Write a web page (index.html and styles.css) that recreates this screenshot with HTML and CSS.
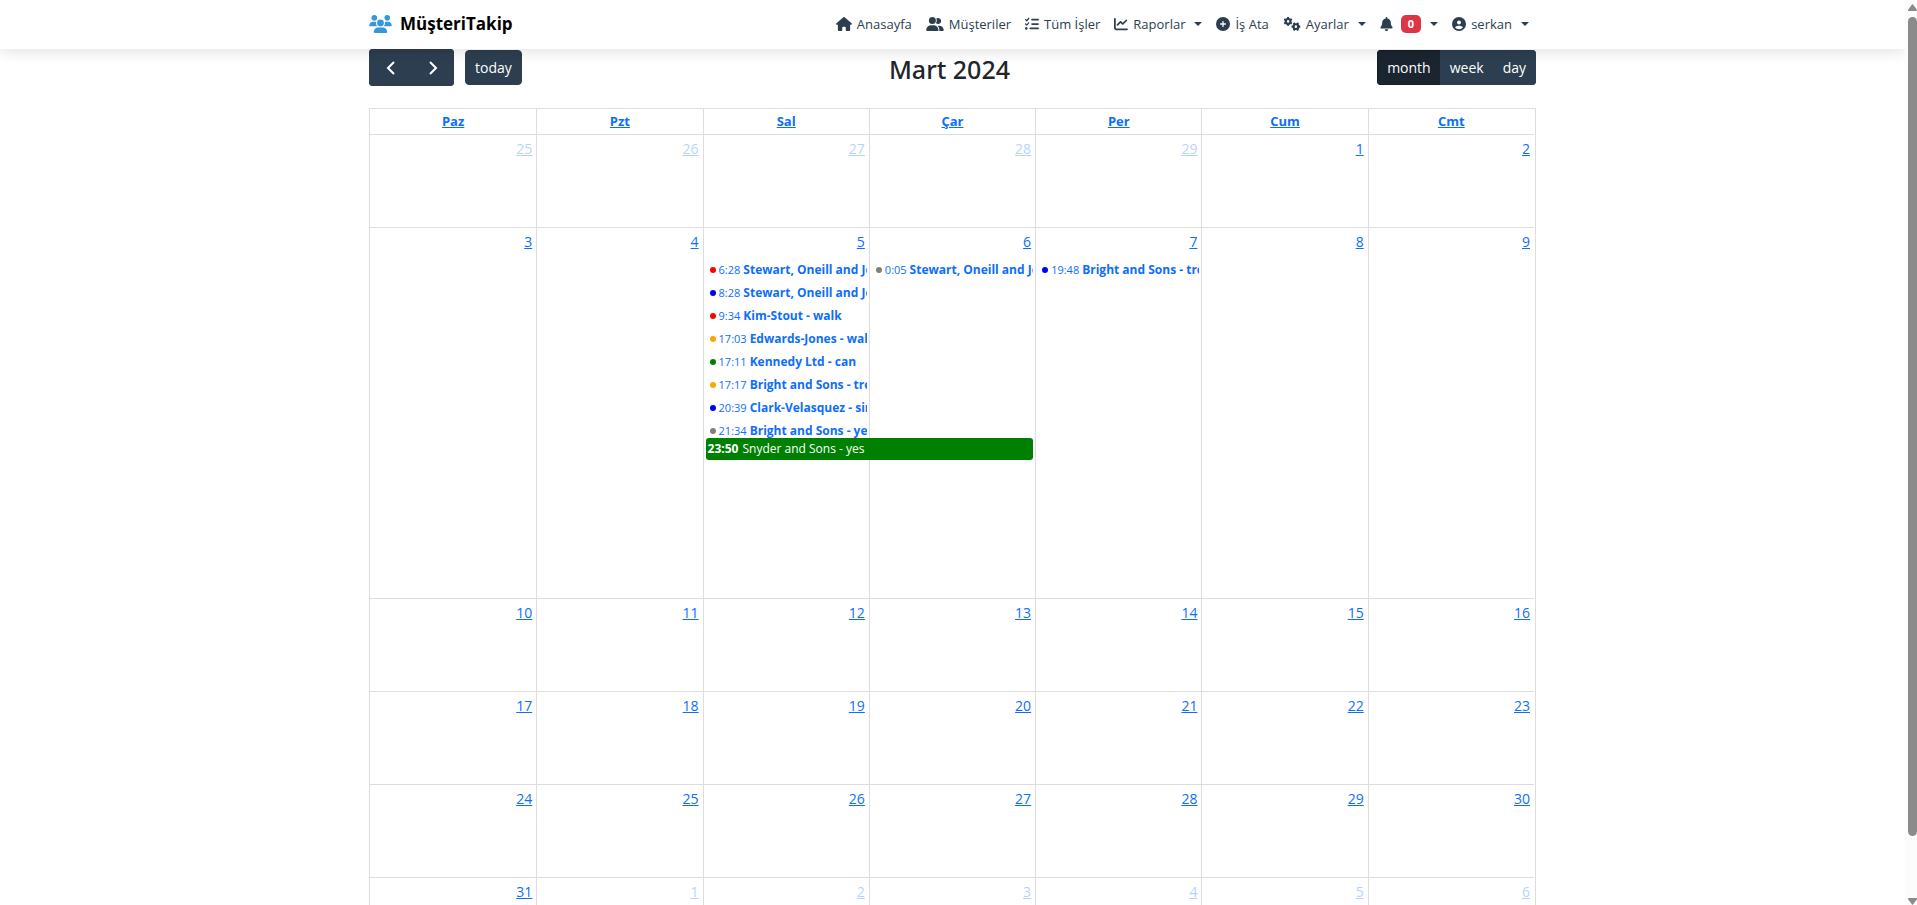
FILE: index.html
```html
<!DOCTYPE html>
<html lang="tr">
<head>
<meta charset="utf-8">
<title>MüşteriTakip</title>
<link rel="stylesheet" href="styles.css">
</head>
<body>
<header class="navbar">
  <div class="container navbar-inner">
    <a class="brand" href="#"><svg class="brand-icon" viewBox="0 0 640 512"><path d="M144 0a80 80 0 1 1 0 160A80 80 0 1 1 144 0zM512 0a80 80 0 1 1 0 160A80 80 0 1 1 512 0zM0 298.700C0 239.800 47.800 192 106.700 192h42.700c15.900 0 31 3.500 44.600 9.700c-1.300 7.200-1.900 14.700-1.900 22.300c0 38.200 16.800 72.500 43.300 96H21.300C9.600 320 0 310.400 0 298.700zM405.300 320c26-23.500 42.600-57.800 42.600-96c0-7.600-.7-15-1.900-22.300c13.600-6.300 28.700-9.700 44.600-9.700h42.700C592.200 192 640 239.800 640 298.700c0 11.800-9.600 21.300-21.300 21.300H405.300zM224 224a96 96 0 1 1 192 0 96 96 0 1 1-192 0zM128 485.300C128 411.700 187.700 352 261.300 352H378.700C452.300 352 512 411.700 512 485.300c0 14.700-11.900 26.700-26.700 26.700H154.700c-14.700 0-26.700-11.900-26.700-26.700z"/></svg>MüşteriTakip</a>
    <nav class="nav">
      <a class="nav-link" href="#"><svg class="icon icon-home" viewBox="0 0 576 512"><path d="M575.8 255.500c0 18-15 32.100-32 32.100h-32l.7 160.200c0 2.700-.2 5.400-.5 8.100V472c0 22.100-17.900 40-40 40H392c-22.100 0-40-17.900-40-40V384c0-17.700-14.300-32-32-32H256c-17.700 0-32 14.300-32 32v88c0 22.100-17.900 40-40 40H104c-22.100 0-40-17.900-40-40V287.600H32c-18 0-32-14-32-32.100c0-9 3-17 10-24L266.400 8c7-7 15-8 22-8s15 2 21 7L564.800 231.500c8 7 12 15 11 24z"/></svg>Anasayfa</a>
      <a class="nav-link" href="#"><svg class="icon icon-wide" viewBox="0 0 640 512"><path d="M96 128a128 128 0 1 1 256 0A128 128 0 1 1 96 128zM0 482.300C0 383.800 79.800 304 178.300 304h91.400C368.200 304 448 383.800 448 482.300c0 16.400-13.300 29.700-29.700 29.700H29.700C13.300 512 0 498.700 0 482.300zM609.300 512H471.400c5.400-9.400 8.600-20.300 8.600-32v-8c0-60.700-27.100-115.200-69.800-151.800c2.400-.1 4.700-.2 7.100-.2h61.400C567.800 320 640 392.200 640 481.300c0 17-13.800 30.700-30.700 30.700zM432 256c-31 0-59-12.600-79.300-32.900C372.400 196.500 384 163.600 384 128c0-26.800-6.600-52.100-18.300-74.300C384.300 40.100 407.200 32 432 32c61.900 0 112 50.100 112 112s-50.100 112-112 112z"/></svg>Müşteriler</a>
      <a class="nav-link" href="#"><svg class="icon" viewBox="0 0 512 512"><path d="M152.100 38.200c9.900 8.900 10.700 24 1.800 33.900l-72 80c-4.400 4.900-10.600 7.800-17.200 7.900s-12.900-2.400-17.600-7L7 113C-2.300 103.600-2.300 88.400 7 79s24.600-9.400 33.900 0l22.100 22.100 55.100-61.200c8.900-9.900 24-10.700 33.900-1.800zm0 160c9.900 8.900 10.700 24 1.800 33.900l-72 80c-4.400 4.900-10.600 7.800-17.200 7.900s-12.900-2.400-17.600-7L7 273c-9.400-9.400-9.400-24.600 0-33.900s24.600-9.400 33.900 0l22.100 22.100 55.100-61.200c8.900-9.900 24-10.700 33.900-1.800zM224 96c0-17.700 14.300-32 32-32H480c17.700 0 32 14.300 32 32s-14.300 32-32 32H256c-17.700 0-32-14.300-32-32zm0 160c0-17.700 14.300-32 32-32H480c17.700 0 32 14.300 32 32s-14.300 32-32 32H256c-17.700 0-32-14.300-32-32zM160 416c0-17.700 14.300-32 32-32H480c17.700 0 32 14.300 32 32s-14.300 32-32 32H192c-17.700 0-32-14.300-32-32zM48 368a48 48 0 1 1 0 96 48 48 0 1 1 0-96z"/></svg>Tüm İşler</a>
      <a class="nav-link dropdown" href="#"><svg class="icon" viewBox="0 0 512 512"><path d="M64 64c0-17.700-14.300-32-32-32S0 46.300 0 64V400c0 44.200 35.800 80 80 80H480c17.700 0 32-14.300 32-32s-14.300-32-32-32H80c-8.800 0-16-7.200-16-16V64zm406.600 86.600c12.500-12.500 12.500-32.800 0-45.300s-32.800-12.500-45.300 0L320 210.700l-57.400-57.400c-12.500-12.500-32.800-12.500-45.300 0l-112 112c-12.500 12.500-12.500 32.800 0 45.300s32.800 12.500 45.300 0L240 221.300l57.400 57.400c12.500 12.500 32.800 12.500 45.300 0l128-128z"/></svg>Raporlar</a>
      <a class="nav-link" href="#"><svg class="icon" viewBox="0 0 512 512"><path d="M256 512A256 256 0 1 0 256 0a256 256 0 1 0 0 512zM232 344V280H168c-13.300 0-24-10.700-24-24s10.700-24 24-24h64V168c0-13.300 10.700-24 24-24s24 10.700 24 24v64h64c13.300 0 24 10.700 24 24s-10.700 24-24 24H280v64c0 13.300-10.700 24-24 24s-24-10.700-24-24z"/></svg>İş Ata</a>
      <a class="nav-link dropdown" href="#"><svg class="icon icon-wide" viewBox="0 0 640 512"><g fill="none" stroke="currentColor"><circle cx="176" cy="160" r="86" stroke-width="80"/><path stroke-width="74" d="M176 0v65M176 255v65M37 80l57 33M258 207l57 33M37 240l57-33M258 113l57-33"/><circle cx="464" cy="352" r="86" stroke-width="80"/><path stroke-width="74" d="M304 352h65M559 352h65M384 213l33 57M511 434l33 57M544 213l-33 57M417 434l-33 57"/></g></svg>Ayarlar</a>
      <a class="nav-link dropdown" href="#" aria-label="Bildirimler"><svg class="icon icon-bell" viewBox="0 0 448 512"><path d="M224 0c-17.700 0-32 14.300-32 32V51.200C119 66 64 130.600 64 208v18.800c0 47-17.300 92.400-48.500 127.600l-7.400 8.300c-8.400 9.400-10.400 22.900-5.300 34.400S19.400 416 32 416H416c12.600 0 24-7.400 29.200-18.900s3.100-25-5.300-34.400l-7.400-8.300C401.300 319.200 384 273.900 384 226.800V208c0-77.400-55-142-128-156.800V32c0-17.700-14.300-32-32-32zm45.300 493.300c12-12 18.700-28.300 18.700-45.300H160c0 17 6.700 33.300 18.700 45.300s28.300 18.700 45.300 18.700s33.300-6.700 45.300-18.700z"/></svg><span class="badge">0</span></a>
      <a class="nav-link dropdown" href="#"><svg class="icon" viewBox="0 0 512 512"><path d="M399 384.200C376.900 345.800 335.400 320 288 320H224c-47.400 0-88.900 25.800-111 64.200c35.200 39.200 86.200 63.800 143 63.800s107.800-24.700 143-63.800zM0 256a256 256 0 1 1 512 0A256 256 0 1 1 0 256zm256 16a72 72 0 1 0 0-144 72 72 0 1 0 0 144z"/></svg>serkan</a>
    </nav>
  </div>
</header>
<main class="container">
  <div class="toolbar">
    <div class="toolbar-side">
      <div class="btn-group">
        <button class="btn btn-arrow" aria-label="prev"><svg class="chevron" viewBox="0 0 16 16"><path d="M11 2L5 8l6 6"/></svg></button>
        <button class="btn btn-arrow" aria-label="next"><svg class="chevron" viewBox="0 0 16 16"><path d="M5 2l6 6-6 6"/></svg></button>
      </div>
      <button class="btn">today</button>
    </div>
    <h2 class="title">Mart 2024</h2>
    <div class="toolbar-side">
      <div class="btn-group">
        <button class="btn active">month</button>
        <button class="btn">week</button>
        <button class="btn">day</button>
      </div>
    </div>
  </div>
  <div class="calendar">
    <table class="grid">
      <thead><tr><th><a href="#">Paz</a></th><th><a href="#">Pzt</a></th><th><a href="#">Sal</a></th><th><a href="#">Çar</a></th><th><a href="#">Per</a></th><th><a href="#">Cum</a></th><th><a href="#">Cmt</a></th></tr></thead>
      <tbody>
        <tr><td class="other"><a class="day" href="#">25</a></td><td class="other"><a class="day" href="#">26</a></td><td class="other"><a class="day" href="#">27</a></td><td class="other"><a class="day" href="#">28</a></td><td class="other"><a class="day" href="#">29</a></td><td><a class="day" href="#">1</a></td><td><a class="day" href="#">2</a></td></tr>
        <tr class="busy">
          <td><a class="day" href="#">3</a></td>
          <td><a class="day" href="#">4</a></td>
          <td><a class="day" href="#">5</a>
            <div class="events">
              <a class="event red" href="#"><time>6:28</time><b>Stewart, Oneill and Je</b></a>
              <a class="event blue" href="#"><time>8:28</time><b>Stewart, Oneill and Je</b></a>
              <a class="event red" href="#"><time>9:34</time><b>Kim-Stout - walk</b></a>
              <a class="event orange" href="#"><time>17:03</time><b>Edwards-Jones - wal</b></a>
              <a class="event green" href="#"><time>17:11</time><b>Kennedy Ltd - can</b></a>
              <a class="event orange" href="#"><time>17:17</time><b>Bright and Sons - tre</b></a>
              <a class="event blue" href="#"><time>20:39</time><b>Clark-Velasquez - sin</b></a>
              <a class="event gray" href="#"><time>21:34</time><b>Bright and Sons - ye</b></a>
            </div>
            <a class="event-bar" href="#"><time>23:50</time>Snyder and Sons - yes</a>
          </td>
          <td><a class="day" href="#">6</a><div class="events"><a class="event gray" href="#"><time>0:05</time><b>Stewart, Oneill and Je</b></a></div></td>
          <td><a class="day" href="#">7</a><div class="events"><a class="event blue" href="#"><time>19:48</time><b>Bright and Sons - tre</b></a></div></td>
          <td><a class="day" href="#">8</a></td>
          <td><a class="day" href="#">9</a></td>
        </tr>
        <tr><td><a class="day" href="#">10</a></td><td><a class="day" href="#">11</a></td><td><a class="day" href="#">12</a></td><td><a class="day" href="#">13</a></td><td><a class="day" href="#">14</a></td><td><a class="day" href="#">15</a></td><td><a class="day" href="#">16</a></td></tr>
        <tr><td><a class="day" href="#">17</a></td><td><a class="day" href="#">18</a></td><td><a class="day" href="#">19</a></td><td><a class="day" href="#">20</a></td><td><a class="day" href="#">21</a></td><td><a class="day" href="#">22</a></td><td><a class="day" href="#">23</a></td></tr>
        <tr><td><a class="day" href="#">24</a></td><td><a class="day" href="#">25</a></td><td><a class="day" href="#">26</a></td><td><a class="day" href="#">27</a></td><td><a class="day" href="#">28</a></td><td><a class="day" href="#">29</a></td><td><a class="day" href="#">30</a></td></tr>
        <tr><td><a class="day" href="#">31</a></td><td class="other"><a class="day" href="#">1</a></td><td class="other"><a class="day" href="#">2</a></td><td class="other"><a class="day" href="#">3</a></td><td class="other"><a class="day" href="#">4</a></td><td class="other"><a class="day" href="#">5</a></td><td class="other"><a class="day" href="#">6</a></td></tr>
      </tbody>
    </table>
  </div>
</main>
<div class="scrollbar" aria-hidden="true">
  <svg class="scroll-arrow" viewBox="0 0 9 7"><path d="M0 6.500Q0 5.500 1 4.500L4 .5Q4.500 0 5 .5L8 4.500Q9 5.500 9 7H0z"/></svg>
  <div class="scroll-track"><div class="scroll-thumb"></div></div>
  <svg class="scroll-arrow" viewBox="0 0 9 7"><path d="M0 0H9Q9 1.500 8 2.500L5 6.500Q4.500 7 4 6.500L1 2.500Q0 1.500 0 0z"/></svg>
</div>
</body>
</html>
```
FILE: styles.css
```css
* { box-sizing: border-box; }
body {
  margin: 0;
  padding-right: 12px;
  height: 100vh;
  overflow: hidden;
  background: #fff;
  color: #212529;
  font: 13px/22px "Open Sans", "Noto Sans", sans-serif;
}
a { color: #0d6efd; }
.container { width: 100%; max-width: 1189px; margin: 0 auto; padding: 0 11px; }

.navbar { position: relative; z-index: 2; background: #fff; box-shadow: 0 2px 14px rgba(0, 0, 0, .13); }
.navbar-inner { display: flex; align-items: center; justify-content: space-between; height: 49px; padding-bottom: 1px; }
.brand { display: flex; align-items: center; gap: 8px; color: #000; font-size: 17px; font-weight: 700; text-decoration: none; }
.brand-icon { width: 23px; height: 18px; fill: #3498db; }
.nav { display: flex; align-items: center; }
.nav-link { display: flex; align-items: center; gap: 5px; padding: 0 7px; color: #2c3e50; text-decoration: none; }
.icon { width: 14px; height: 14px; fill: currentColor; }
.icon-home { width: 16px; }
.icon-wide { width: 18px; }
.icon-bell { width: 13px; }
.dropdown::after { content: ""; margin-left: 4px; border: 4px solid transparent; border-top-color: currentColor; border-bottom: 0; }
.badge { margin-left: 3px; padding: 0 7px; border-radius: 5px; background: #dc3545; color: #fff; font-size: 11px; font-weight: 700; line-height: 18px; }

.toolbar { display: flex; align-items: center; justify-content: space-between; min-height: 37px; margin-bottom: 22px; }
.toolbar-side { display: flex; align-items: center; gap: 11px; }
.title { margin: 0; padding-top: 2px; font-family: "Noto Sans", "Open Sans", sans-serif; font-size: 25px; font-weight: 500; line-height: 32px; }
.btn-group { display: flex; border-radius: 4px; overflow: hidden; }
.btn { height: 35px; padding: 0 9px; border: 1px solid #2c3e50; border-radius: 4px; background: #2c3e50; color: #fff; font: inherit; font-size: 14px; }
.btn-group .btn { border-radius: 0; }
.btn-group .btn + .btn { margin-left: -1px; }
.btn-group .btn-arrow { display: flex; align-items: center; justify-content: center; width: 43px; height: 37px; }
.btn.active { background: #1a252f; border-color: #151e27; }
.chevron { flex: none; width: 16px; height: 16px; fill: none; stroke: #fff; stroke-width: 2; }

.calendar { padding-right: 1px; border: 1px solid #ddd; }
.grid { width: 100%; border-collapse: separate; border-spacing: 0; table-layout: fixed; }
.grid th, .grid td { padding: 0; vertical-align: top; }
.grid th + th, .grid td + td { border-left: 1px solid #ddd; }
.grid td { height: 93px; border-top: 1px solid #ddd; }
.grid .busy td { height: 371px; }
.grid th { height: 25px; font-size: 13px; line-height: 25px; }
.day { display: block; width: fit-content; margin-left: auto; padding: 4px; font-size: 14px; line-height: 20px; }
.other .day { opacity: .3; }
.events { display: grid; margin: 2px 2px -4px; }
.event { display: flex; align-items: center; gap: 3px; height: 23px; padding-left: 4px; overflow: hidden; font-size: 12px; white-space: nowrap; text-decoration: none; }
.event time { font-size: 11px; }
.event b { min-width: 0; overflow: hidden; }
.event::before { content: ""; flex: none; width: 6px; height: 6px; border-radius: 50%; background: var(--dot); }
.red { --dot: red; }
.blue { --dot: blue; }
.orange { --dot: orange; }
.green { --dot: green; }
.gray { --dot: gray; }
.event-bar { position: relative; z-index: 1; display: flex; gap: 4px; width: calc(200% - 3px); margin-left: 2px; padding-left: 2px; border-radius: 3px; background: green; color: #fff; font-size: 12px; line-height: 22px; text-decoration: none; }
.event-bar time { font-weight: 700; }

.scrollbar { position: fixed; top: 0; right: 0; bottom: 0; z-index: 3; display: flex; flex-direction: column; align-items: flex-end; width: 12px; padding-top: 4px; background: #fcfcfc; }
.scroll-arrow { width: 9px; height: 7px; fill: #8b8b8b; }
.scroll-track { flex: 1; width: 9px; padding-top: 6px; }
.scroll-thumb { height: 93%; border-radius: 5px; background: #8b8b8b; }
```
